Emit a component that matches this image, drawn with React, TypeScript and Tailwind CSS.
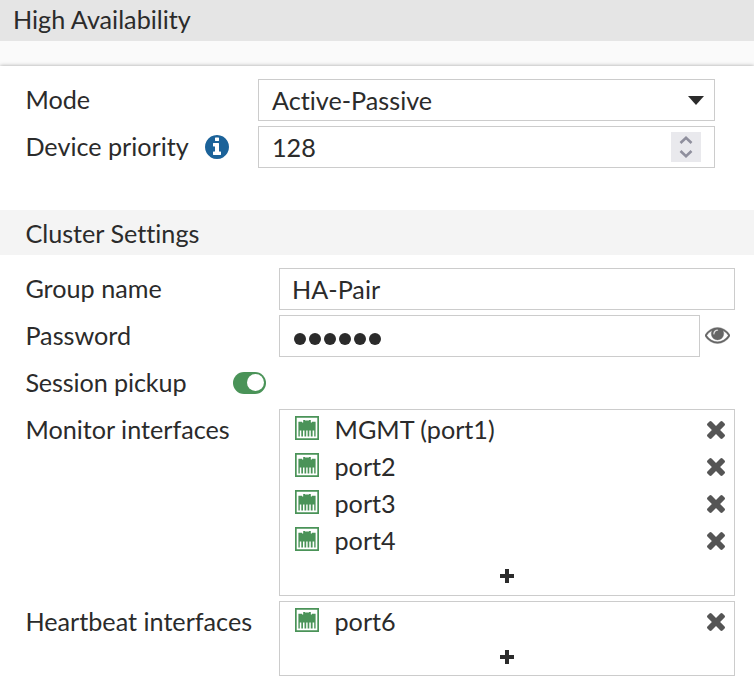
import type { ReactNode } from 'react';

function InfoIcon() {
  return (
    <svg viewBox="128 128 1536 1536" className="block h-[24px] w-[24px] fill-[#1b6299]">
      <path d="M1152 1376v-160q0-14-9-23t-23-9h-96v-512q0-14-9-23t-23-9h-320q-14 0-23 9t-9 23v160q0 14 9 23t23 9h96v320h-96q-14 0-23 9t-9 23v160q0 14 9 23t23 9h448q14 0 23-9t9-23zm-128-896v-160q0-14-9-23t-23-9h-192q-14 0-23 9t-9 23v160q0 14 9 23t23 9h192q14 0 23-9t9-23zm640 416q0 209-103 385.5t-279.5 279.5-385.5 103-385.5-103-279.5-279.5-103-385.5 103-385.5 279.5-279.5 385.5-103 385.5 103 279.5 279.5 103 385.5z" />
    </svg>
  );
}

function EyeIcon() {
  return (
    <svg viewBox="0 384 1792 1152" className="-mt-[1px] block h-[17px] w-[25px] fill-[#666666] stroke-[#666666] stroke-[24]">
      <path d="M1664 960q-152-236-381-353 61 104 61 225 0 185-131.5 316.5t-316.5 131.5-316.5-131.5-131.5-316.5q0-121 61-225-229 117-381 353 133 205 333.5 326.5t434.5 121.5 434.5-121.5 333.5-326.5zm-720-384q0-20-14-34t-34-14q-125 0-214.5 89.5t-89.5 214.5q0 20 14 34t34 14 34-14 14-34q0-86 61-147t147-61q20 0 34-14t14-34zm848 384q0 34-20 69-140 230-376.5 368.5t-499.5 138.5-499.5-139-376.5-368q-20-35-20-69t20-69q140-229 376.5-368t499.5-139 499.5 139 376.5 368q20 35 20 69z" />
    </svg>
  );
}

function RemoveIcon() {
  return (
    <svg viewBox="302 366 1188 1188" className="block h-[18px] w-[18px] fill-[#555555]">
      <path d="M1490 1322q0 40-28 68l-136 136q-28 28-68 28t-68-28l-294-294-294 294q-28 28-68 28t-68-28l-136-136q-28-28-28-68t28-68l294-294-294-294q-28-28-28-68t28-68l136-136q28-28 68-28t68 28l294 294 294-294q28-28 68-28t68 28l136 136q28 28 28 68t-28 68l-294 294 294 294q28 28 28 68z" />
    </svg>
  );
}

function PortIcon() {
  return (
    <svg viewBox="0 0 24 24" className="block h-[24px] w-[24px] fill-[#4a9358]">
      <path fillRule="evenodd" d="M0 0H24V24H0ZM1.7 1.7V22.3H22.3V1.7Z" />
      <path d="M3.4 5.700H7V6.500H8.200V4H10V4.500H14V4H15.800V6.500H17V5.700H20.600V20.500H19.200V14.500H17.600V20.500H15.800V14.500H14.300V20.500H12.600V14.500H11.200V20.500H9.500V14.500H8V20.500H6.300V14.500H4.800V20.500H3.400Z" />
    </svg>
  );
}

function Row({ label, width, children }: { label: ReactNode; width: string; children: ReactNode }) {
  return (
    <div className="flex items-start">
      <div className={`flex h-[42px] shrink-0 items-center whitespace-nowrap ${width}`}>{label}</div>
      {children}
    </div>
  );
}

function Label({ children }: { children: string }) {
  return <span className="pb-[2px] pl-[0.4px]">{children}</span>;
}

function InterfaceList({ names, height }: { names: string[]; height: string }) {
  return (
    <div className={`flex w-[456px] flex-col border border-[#cccccc] ${height}`}>
      <ul className="pt-[1px]">
        {names.map((name) => (
          <li key={name} className="flex h-[37px] items-center pr-[9px] pl-[15px]">
            <span className="-mt-[3px]">
              <PortIcon />
            </span>
            <span className="flex-1 pb-[2px] pl-[15.5px]">{name}</span>
            <RemoveIcon />
          </li>
        ))}
      </ul>
      <div className="flex flex-1 justify-center pt-[10px]">
        <svg viewBox="0 0 14 14" className="block h-[14px] w-[14px] fill-[#2b2b2b]">
          <path d="M5 0H9V5H14V9H9V14H5V9H0V5H5Z" />
        </svg>
      </div>
    </div>
  );
}

export default function App() {
  return (
    <main className="h-[691px] w-[754px] overflow-hidden bg-white font-['Lato',sans-serif] text-[25.2px] leading-[36px] text-[#2b2b2b] [font-variant-ligatures:none]">
      <header className="flex h-[41px] items-center bg-[#e5e5e5] pb-[4px] pl-[13px]">
        <h1>High Availability</h1>
      </header>
      <div className="h-[25px] bg-[#fafafa]" />

      <section className="flex h-[144px] flex-col gap-[5px] pt-[13px] pl-[25px] shadow-[0_0_4px_rgba(0,0,0,0.35)]">
        <Row label={<Label>Mode</Label>} width="w-[233px]">
          <div className="flex h-[42px] w-[457px] items-center justify-between border border-[#cccccc] pr-[10px] pl-[13px]">
            <span className="pb-[1px]">Active-Passive</span>
            <svg viewBox="0 0 16 9" className="mt-[1px] block h-[9px] w-[16px] fill-[#2b2b2b]">
              <path d="M0 0H16L8 9Z" />
            </svg>
          </div>
        </Row>
        <Row
          width="w-[233px]"
          label={
            <>
              <span className="w-[180px] pb-[2px] pl-[0.4px]">Device priority</span>
              <InfoIcon />
            </>
          }
        >
          <div className="flex h-[42px] w-[457px] items-center justify-between border border-[#cccccc] pr-[13px] pl-[13px]">
            <span>128</span>
            <svg viewBox="0 0 30 30" className="block h-[30px] w-[30px] bg-[#e9e9ed]">
              <path d="M9.5 11L15 5.8L20.500 11M9.500 19L15 24.200L20.500 19" fill="none" stroke="#8f8f9d" strokeWidth="2.600" />
            </svg>
          </div>
        </Row>
      </section>

      <h2 className="flex h-[45px] items-center bg-[#f4f4f4] pt-[1px] pl-[25.4px]">Cluster Settings</h2>

      <section className="flex flex-col gap-[5px] pt-[13px] pl-[25px]">
        <Row label={<Label>Group name</Label>} width="w-[254px]">
          <div className="flex h-[42px] w-[456px] items-center border border-[#cccccc] pl-[12px]">HA-Pair</div>
        </Row>
        <Row label={<Label>Password</Label>} width="w-[254px]">
          <div className="flex h-[42px] w-[421px] items-center gap-[3.1px] border border-[#cccccc] pt-[5px] pl-[14px]">
            {[0, 1, 2, 3, 4, 5].map((i) => (
              <span key={i} className="h-[12px] w-[12px] rounded-full bg-[#2b2b2b]" />
            ))}
          </div>
          <div className="flex h-[42px] items-center pl-[5px]">
            <EyeIcon />
          </div>
        </Row>
        <Row
          label={<span className="pb-[2px] pl-[0.4px] tracking-[-0.12px]">Session pickup</span>}
          width="w-[208px]"
        >
          <div className="flex h-[42px] items-center">
            <div className="-mt-[1px] flex h-[22px] w-[33px] items-center justify-end rounded-full bg-[#4a9358] pr-[2px]">
              <span className="h-[17px] w-[17px] rounded-full bg-white" />
            </div>
          </div>
        </Row>
        <Row label={<Label>Monitor interfaces</Label>} width="w-[254px]">
          <InterfaceList names={['MGMT (port1)', 'port2', 'port3', 'port4']} height="h-[187px]" />
        </Row>
        <Row label={<Label>Heartbeat interfaces</Label>} width="w-[254px]">
          <InterfaceList names={['port6']} height="h-[75px]" />
        </Row>
      </section>
    </main>
  );
}
